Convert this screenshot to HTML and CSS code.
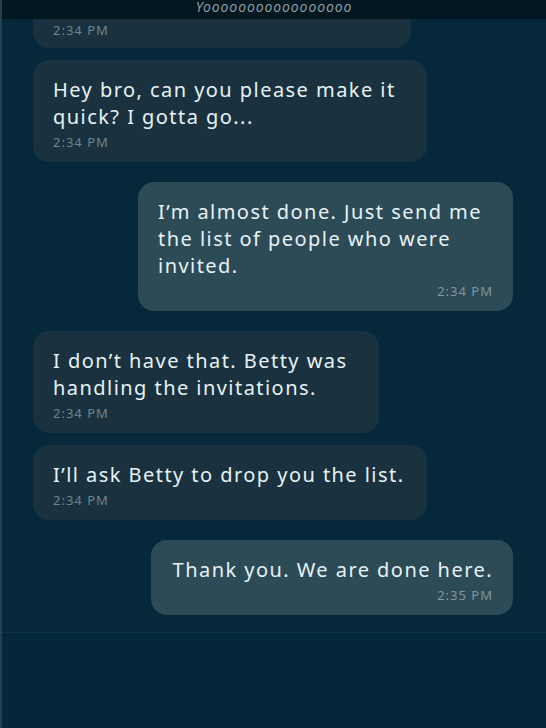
FILE: index.html
```html
<!DOCTYPE html>
<html lang="en">
<head>
<meta charset="utf-8">
<title>Chat</title>
<link rel="stylesheet" href="styles.css">
</head>
<body>
<div class="screen">
  <header class="topbar"><span class="title">Yooooooooooooooooo</span></header>
  <main class="chat">
    <section class="group in">
      <div class="msg cut"><span class="time">2:34 PM</span></div>
      <div class="msg multi"><p class="text">Hey bro, can you please make it<br>quick? I gotta go...</p><span class="time">2:34 PM</span></div>
    </section>
    <section class="group out">
      <div class="msg multi"><p class="text">I’m almost done. Just send me<br>the list of people who were<br>invited.</p><span class="time">2:34 PM</span></div>
    </section>
    <section class="group in">
      <div class="msg multi"><p class="text">I don’t have that. Betty was<br>handling the invitations.</p><span class="time">2:34 PM</span></div>
      <div class="msg"><p class="text">I’ll ask Betty to drop you the list.</p><span class="time">2:34 PM</span></div>
    </section>
    <section class="group out">
      <div class="msg"><p class="text">Thank you. We are done here.</p><span class="time">2:35 PM</span></div>
    </section>
  </main>
  <footer class="composer"></footer>
</div>
</body>
</html>
```

FILE: styles.css
```css
* { box-sizing: border-box; }
html, body { margin: 0; padding: 0; }
body {
  width: 546px;
  height: 728px;
  overflow: hidden;
  background: #05283a;
  font-family: "Noto Sans", "DejaVu Sans", sans-serif;
}
.screen {
  height: 728px;
  display: flex;
  flex-direction: column;
  border-left: 2px solid #22424f;
}
.topbar {
  height: 19px;
  flex: none;
  background: #02171f;
  display: flex;
  justify-content: center;
  align-items: flex-end;
  overflow: hidden;
}
.title {
  font-style: italic;
  font-size: 14px;
  line-height: 14px;
  color: #8d9ca2;
  letter-spacing: 0.9px;
  margin-bottom: 5px;
}
.chat {
  flex: 1;
  display: flex;
  flex-direction: column;
  gap: 20px;
  padding: 0 33px 0 31px;
  overflow: hidden;
}
.group {
  display: flex;
  flex-direction: column;
  gap: 12px;
}
.group.in { align-items: flex-start; }
.group.out { align-items: flex-end; }
.msg {
  display: flex;
  flex-direction: column;
  border-radius: 16px;
  padding: 16px 23px 11px 20px;
  color: #e6f2f5;
}
.in .msg { background: #1a323f; max-width: 400px; }
.out .msg { background: #2d4b57; max-width: 400px; padding-right: 20px; padding-left: 22px; }
.out .msg.multi { padding-left: 20px; }
.in .multi .text { padding-right: 8px; }
.out .multi .text { padding-right: 11px; }
.msg.cut {
  width: 378px;
  border-radius: 0 0 16px 16px;
  padding-top: 2px;
  padding-bottom: 9px;
}
.text {
  margin: 0;
  font-size: 20px;
  line-height: 27px;
  letter-spacing: 1.45px;
  white-space: nowrap;
}
.time {
  margin-top: 3px;
  font-size: 13px;
  line-height: 18px;
  letter-spacing: 1px;
  color: #6d848d;
}
.cut .time { margin-top: 0; }
.out .time { align-self: flex-end; color: #7f969e; }
.composer {
  height: 96px;
  flex: none;
  border-top: 1px solid #0c3343;
  background: #04283a;
}
```
